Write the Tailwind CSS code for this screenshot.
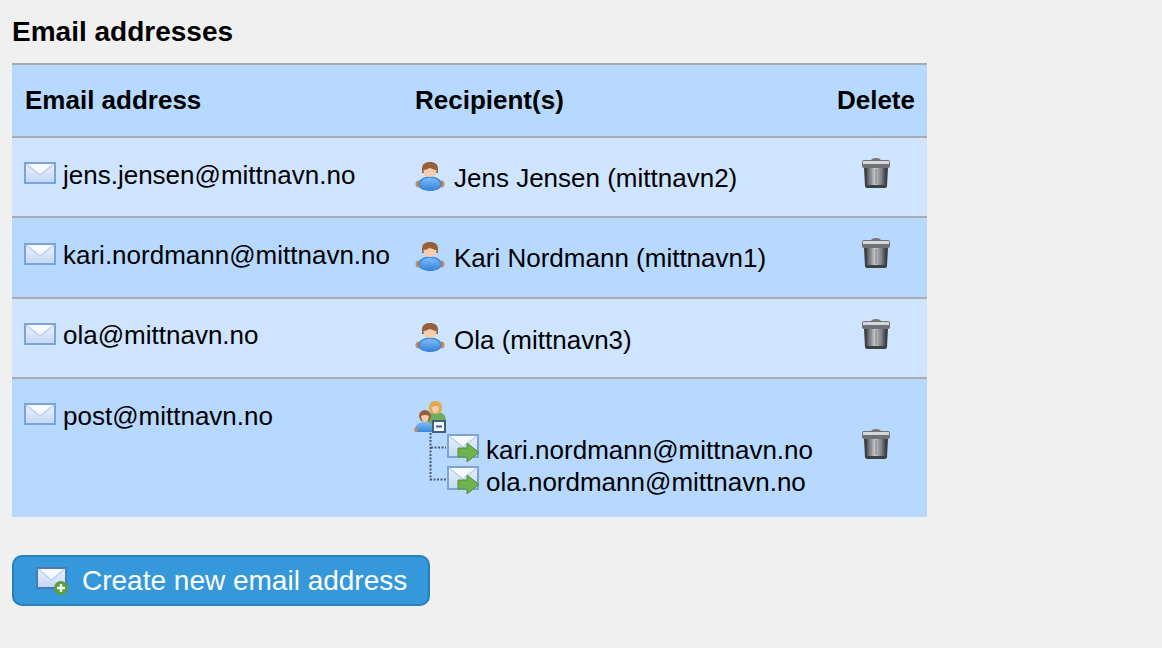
<!DOCTYPE html>
<html lang="en">
<head>
  <meta charset="UTF-8" />
  <title>Email addresses</title>
  <script src="https://cdn.jsdelivr.net/npm/@tailwindcss/browser@4"></script>
</head>
<body class="bg-[#f0f0f0] min-h-screen font-['Liberation_Sans',Arial,sans-serif] text-black text-[26px] overflow-hidden">

  <!-- shared icons -->
  <svg width="0" height="0" class="absolute">
    <defs>
      <linearGradient id="mailFill" x1="0" y1="0" x2="0" y2="1">
        <stop offset="0" stop-color="#eef4fe" />
        <stop offset="1" stop-color="#c0d6f5" />
      </linearGradient>
      <linearGradient id="canBody" x1="0" y1="0" x2="1" y2="0">
        <stop offset="0" stop-color="#55585c" />
        <stop offset="0.45" stop-color="#c9cbcd" />
        <stop offset="1" stop-color="#4b4e52" />
      </linearGradient>
      <linearGradient id="shirt" x1="0" y1="0" x2="0" y2="1">
        <stop offset="0" stop-color="#7dbcf5" />
        <stop offset="1" stop-color="#3d86dc" />
      </linearGradient>
      <symbol id="mail" viewBox="0 0 32 22">
        <rect x="1" y="1" width="30" height="20" fill="url(#mailFill)" stroke="#7ba3d6" stroke-width="2" />
        <path d="M2 2 L16 13 L30 2" fill="#f6f9ff" stroke="#b9cfee" stroke-width="1.500" />
      </symbol>
      <symbol id="person" viewBox="0 0 30 30">
        <ellipse cx="3.500" cy="23" rx="3" ry="3.500" fill="#d08a4e" />
        <ellipse cx="26.500" cy="23" rx="3" ry="3.500" fill="#d08a4e" />
        <path d="M3 23 C4 18 9 15.500 15 15.500 C21 15.500 26 18 27 23 C26 28 21 30 15 30 C9 30 4 28 3 23 Z" fill="#3f88dc" />
        <path d="M5 23 C6 19 10 17 15 17 C20 17 24 19 25 23 C24 27 20 28.500 15 28.500 C10 28.500 6 27 5 23 Z" fill="url(#shirt)" />
        <path d="M7 8 C7 3 10 1 15 1 C20 1 23 3 23 8 V12 H7 Z" fill="#96603a" />
        <path d="M8.500 9 C11 9 13 7.500 15 7 C17 7.500 19 9 21.500 9 L21 13 C20 17 10 17 9 13 Z" fill="#f3cdae" />
      </symbol>
      <symbol id="forward" viewBox="0 0 32 28">
        <rect x="1" y="1" width="30" height="22" fill="url(#mailFill)" stroke="#7ba3d6" stroke-width="2" />
        <path d="M2 2 L16 13 L30 2" fill="#f6f9ff" stroke="#b9cfee" stroke-width="1.500" />
        <path d="M11 14 H20 V9 L32 18.500 L20 28 V23 H11 Z" fill="#6fb04f" stroke="#549238" stroke-width="1" />
      </symbol>
      <symbol id="trash" viewBox="0 0 30 32">
        <path d="M10 4 Q10 1 15 1 Q20 1 20 4" fill="#777" />
        <rect x="1" y="3" width="28" height="8" rx="2" fill="#6f7276" />
        <rect x="2" y="4" width="26" height="3" fill="#d6d7d8" />
        <path d="M3 11 H27 L26 29 Q26 31 24 31 H6 Q4 31 4 29 Z" fill="#3d4045" />
        <path d="M6 11 H24 V28 H6 Z" fill="url(#canBody)" />
        <path d="M10 12 V27 M15 12 V27 M20 12 V27" stroke="#8b8e92" stroke-width="1.200" />
      </symbol>
    </defs>
  </svg>

  <main class="pl-3 pt-[17px]">
    <h1 class="text-[28px] leading-[30px] font-bold mb-[16px]">Email addresses</h1>

    <table class="w-[915px] table-fixed border-collapse bg-[#b7d9ff]">
      <colgroup>
        <col class="w-[391px]" />
        <col class="w-[394px]" />
        <col class="w-[130px]" />
      </colgroup>
      <thead>
        <tr class="h-[73px] border-y-2 border-[#a9acaf] font-bold text-left">
          <th class="pl-[13px]">Email address</th>
          <th class="pl-3">Recipient(s)</th>
          <th class="pr-3 text-right">Delete</th>
        </tr>
      </thead>
      <tbody>
        <tr class="h-[80px] border-b-2 border-[#a9acaf] bg-[#cfe4ff] align-top">
          <td class="pl-3 pt-[23px]">
            <div class="flex gap-[7px]"><svg class="w-[32px] h-[22px] mt-[1px] shrink-0"><use href="#mail" /></svg><span class="leading-[28px] whitespace-nowrap">jens.jensen@mittnavn.no</span></div>
          </td>
          <td class="pl-3 pt-[23px]">
            <div class="flex gap-[9px]"><svg class="w-[30px] h-[30px] shrink-0"><use href="#person" /></svg><span class="leading-[34px] whitespace-nowrap">Jens Jensen (mittnavn2)</span></div>
          </td>
          <td class="align-middle"><svg class="w-[30px] h-[32px] ml-[64px] -mt-[8px]"><use href="#trash" /></svg></td>
        </tr>
        <tr class="h-[81px] border-b-2 border-[#a9acaf] align-top">
          <td class="pl-3 pt-[23px]">
            <div class="flex gap-[7px]"><svg class="w-[32px] h-[22px] mt-[2px] shrink-0"><use href="#mail" /></svg><span class="leading-[28px] whitespace-nowrap">kari.nordmann@mittnavn.no</span></div>
          </td>
          <td class="pl-3 pt-[23px]">
            <div class="flex gap-[9px]"><svg class="w-[30px] h-[30px] shrink-0"><use href="#person" /></svg><span class="leading-[34px] whitespace-nowrap">Kari Nordmann (mittnavn1)</span></div>
          </td>
          <td class="align-middle"><svg class="w-[30px] h-[32px] ml-[64px] -mt-[10px]"><use href="#trash" /></svg></td>
        </tr>
        <tr class="h-[80px] border-b-2 border-[#a9acaf] bg-[#cfe4ff] align-top">
          <td class="pl-3 pt-[22px]">
            <div class="flex gap-[7px]"><svg class="w-[32px] h-[22px] mt-[2px] shrink-0"><use href="#mail" /></svg><span class="leading-[28px] whitespace-nowrap">ola@mittnavn.no</span></div>
          </td>
          <td class="pl-3 pt-[23px]">
            <div class="flex gap-[9px]"><svg class="w-[30px] h-[30px] shrink-0"><use href="#person" /></svg><span class="leading-[36px] whitespace-nowrap">Ola (mittnavn3)</span></div>
          </td>
          <td class="align-middle"><svg class="w-[30px] h-[32px] ml-[64px] -mt-[8px]"><use href="#trash" /></svg></td>
        </tr>
        <tr class="h-[139px] align-top">
          <td class="pl-3 pt-[23px]">
            <div class="flex gap-[7px]"><svg class="w-[32px] h-[22px] mt-[1px] shrink-0"><use href="#mail" /></svg><span class="leading-[28px] whitespace-nowrap">post@mittnavn.no</span></div>
          </td>
          <td class="pl-3 pt-[22px]">
            <!-- group icon with the little minus box -->
            <svg class="w-[32px] h-[32px] block -ml-[1px]" viewBox="0 0 32 32">
              <path d="M14 20 C14 13 17 11 22 11 C28 11 32 13 32 20 V24 H14 Z" fill="#6fae5c" />
              <path d="M15 7 C15 2 18 0 21 0 C25 0 28 2 28 7 C28 11 25 13 21 13 C18 13 15 11 15 7 Z" fill="#e3a94f" />
              <path d="M18 6 Q22 4 25 6 Q25 12 21.500 12 Q18 12 18 6 Z" fill="#f3cdae" />
              <circle cx="11" cy="15" r="6" fill="#96603a" />
              <path d="M7 15 Q11 13 15 15 Q14 21 11 21 Q8 21 7 15 Z" fill="#f3cdae" />
              <path d="M1 31 C0 24 5 21 11 21 C16 21 20 23 20 31 Z" fill="url(#shirt)" />
              <circle cx="2" cy="29" r="2" fill="#d08a4e" />
              <rect x="19" y="20" width="12" height="11" fill="#f4f7fb" stroke="#41607f" stroke-width="2" />
              <rect x="22" y="24.500" width="6" height="2" fill="#41607f" />
            </svg>
            <div class="flex items-start h-[32px]">
              <svg class="w-[32px] h-[32px] shrink-0" viewBox="0 0 32 32"><path d="M15.500 0 V32 M16 14.500 H31" stroke="#4a5a6a" stroke-width="2" stroke-dasharray="2 1.500" fill="none" /></svg>
              <svg class="w-[32px] h-[28px] mt-[1px] shrink-0"><use href="#forward" /></svg>
              <span class="leading-[32px] ml-[7px] mt-[1px] whitespace-nowrap">kari.nordmann@mittnavn.no</span>
            </div>
            <div class="flex items-start h-[32px]">
              <svg class="w-[32px] h-[32px] shrink-0" viewBox="0 0 32 32"><path d="M15.500 0 V14.500 H31" stroke="#4a5a6a" stroke-width="2" stroke-dasharray="2 1.500" fill="none" /></svg>
              <svg class="w-[32px] h-[28px] mt-[1px] shrink-0"><use href="#forward" /></svg>
              <span class="leading-[32px] ml-[7px] mt-[1px] whitespace-nowrap">ola.nordmann@mittnavn.no</span>
            </div>
          </td>
          <td class="align-middle"><svg class="w-[30px] h-[32px] ml-[64px] -mt-[8px]"><use href="#trash" /></svg></td>
        </tr>
      </tbody>
    </table>

    <button class="mt-[38px] w-[418px] h-[51px] flex items-center pl-[22px] gap-[14px] rounded-[10px] bg-[#3498db] border-2 border-[#2980b9] text-white text-[26px]">
      <svg class="w-[32px] h-[28px] shrink-0" viewBox="0 0 32 28">
        <rect x="1" y="1" width="29" height="20" fill="url(#mailFill)" stroke="#4c79b8" stroke-width="2" />
        <path d="M2 2 L15.500 13 L29 2" fill="#f6f9ff" stroke="#b9cfee" stroke-width="1.500" />
        <circle cx="25" cy="21" r="7" fill="#5f9e3c" />
        <path d="M25 17 V25 M21 21 H29" stroke="#f2f8ee" stroke-width="2.500" />
      </svg>
      <span class="text-[28px]">Create new email address</span>
    </button>
  </main>

</body>
</html>
